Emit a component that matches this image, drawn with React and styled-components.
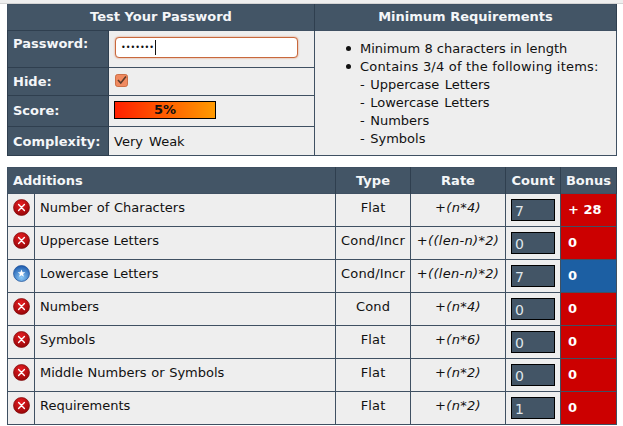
import styled, { createGlobalStyle } from "styled-components";

const GlobalStyle = createGlobalStyle`
  html, body {
    margin: 0;
    padding: 0;
    background: #fff;
    overflow: hidden;
  }
  body {
    font-family: "DejaVu Sans", Verdana, sans-serif;
    font-size: 13px;
    color: #111;
  }
`;

const Page = styled.div`
  width: 623px;
  height: 426px;
  overflow: hidden;
`;

const TopStrip = styled.div`
  background: #eeeeee;
  border-bottom: 1px solid #d4d4d4;
  box-sizing: border-box;
  height: 4px;
`;

const Wrap = styled.div`
  width: 610px;
  margin-left: 7px;
  display: flex;
  flex-direction: column;
  gap: 11px;
`;

const Table = styled.table`
  width: 610px;
  table-layout: fixed;
  border-collapse: collapse;
  border: 1px solid #3f5062;
`;

const Head = styled.th`
  height: ${(p) => p.$h || 26}px;
  box-sizing: border-box;
  background: #435566;
  color: #f4f6f8;
  font-size: 13px;
  font-weight: bold;
  text-align: ${(p) => p.$align || "center"};
  padding: 0 0 ${(p) => p.$bottom ?? 2}px ${(p) => p.$pad || 0}px;
  border-right: 1px solid #2f3f4f;
`;

const Label = styled.td`
  height: ${(p) => p.$h}px;
  box-sizing: border-box;
  background: #435566;
  color: #f4f6f8;
  font-weight: bold;
  padding: ${(p) => p.$top || 0}px 0 ${(p) => p.$bottom || 0}px 5px;
  vertical-align: ${(p) => (p.$top ? "top" : "middle")};
  border: 1px solid #2f3f4f;
`;

const Value = styled.td`
  box-sizing: border-box;
  background: #eeeeee;
  padding: 0 0 0 5px;
  border: 1px solid #3f5062;
  vertical-align: middle;
  word-spacing: ${(p) => p.$words || 0}px;
`;

const PasswordBox = styled.div`
  width: 183px;
  height: 21px;
  box-sizing: border-box;
  margin: 0 0 4px 1px;
  padding-left: 5px;
  background: #fff;
  border: 1px solid #c8683c;
  border-radius: 4px;
  box-shadow: 0 0 2px #e08a60;
  display: flex;
  align-items: center;
  font-size: 8px;
`;

const Caret = styled.span`
  width: 1px;
  height: 15px;
  background: #111;
  margin-left: 1px;
`;

const Check = styled.svg`
  display: block;
  margin: 0 0 3px 1px;
`;

const ScoreBar = styled.div`
  width: 102px;
  height: 18px;
  box-sizing: border-box;
  margin-bottom: 3px;
  border: 1px solid #000;
  background: linear-gradient(to right, #ff2000, #ff9a00);
  color: #111;
  font-weight: bold;
  font-size: 13px;
  line-height: 16px;
  text-align: center;
`;

const ReqCell = styled.td`
  background: #eeeeee;
  border: 1px solid #3f5062;
  vertical-align: top;
  padding: 9px 0 0 45px;
  line-height: 18px;
`;

const Bullet = styled.div`
  position: relative;
  letter-spacing: ${(p) => p.$track || 0}px;
  &::before {
    content: "";
    position: absolute;
    left: -14px;
    top: 6px;
    width: 5px;
    height: 5px;
    border-radius: 50%;
    background: #111;
  }
`;

const Sub = styled.div`
  word-spacing: 1.4px;
`;

const IconCell = styled.td`
  height: 33px;
  box-sizing: border-box;
  background: #eeeeee;
  border: 1px solid #3f5062;
  padding: 0 0 6px 5px;
  vertical-align: middle;
`;

const Icon = styled.svg`
  display: block;
`;

const NameCell = styled.td`
  box-sizing: border-box;
  background: #eeeeee;
  border: 1px solid #3f5062;
  padding: 0 0 5px 5px;
  vertical-align: middle;
  word-spacing: 0.5px;
`;

const TypeCell = styled(NameCell)`
  padding-left: 0;
  text-align: center;
  letter-spacing: 0.15px;
`;

const RateCell = styled(TypeCell)`
  font-style: italic;
  letter-spacing: 0.3px;
`;

const CountCell = styled.td`
  box-sizing: border-box;
  background: #eeeeee;
  border: 1px solid #3f5062;
  padding: 0 0 0 5px;
  vertical-align: middle;
`;

const CountBox = styled.div`
  width: 44px;
  height: 22px;
  box-sizing: border-box;
  padding: 3px 0 0 3px;
  background: #435566;
  border: 1px solid #000;
  color: #dfe5ea;
  font-size: 14px;
  line-height: 17px;
`;

const BonusCell = styled.td`
  box-sizing: border-box;
  background: ${(p) => (p.$ok ? "#1c5fa3" : "#cc0000")};
  border: 1px solid #3f5062;
  color: #fff;
  font-weight: bold;
  padding: 0 0 2px 7px;
  vertical-align: middle;
`;

const FailIcon = () => (
  <Icon width="17" height="17" viewBox="0 0 17 17">
    <defs>
      <radialGradient id="failFill" cx="45%" cy="30%" r="75%">
        <stop offset="0%" stopColor="#e61e22" />
        <stop offset="100%" stopColor="#930406" />
      </radialGradient>
    </defs>
    <circle cx="8.5" cy="8.5" r="8" fill="url(#failFill)" stroke="#7d0a0a" strokeWidth="0.7" />
    <path d="M5.6 5.6l5.8 5.8M11.4 5.6l-5.8 5.8" stroke="#fff" strokeWidth="1.4" strokeLinecap="round" />
  </Icon>
);

const StarIcon = () => (
  <Icon width="17" height="17" viewBox="0 0 17 17">
    <defs>
      <radialGradient id="starFill" cx="50%" cy="75%" r="75%">
        <stop offset="0%" stopColor="#8ccaf8" />
        <stop offset="100%" stopColor="#1a58ac" />
      </radialGradient>
    </defs>
    <circle cx="8.5" cy="8.5" r="8" fill="url(#starFill)" stroke="#1b4f96" strokeWidth="0.7" />
    <path d="M8.5 4.6l1.1 2.6h2.7l-2.2 1.8.8 2.8-2.4-1.6-2.4 1.6.8-2.8-2.2-1.8h2.7z" fill="#fff" />
  </Icon>
);

const rows = [
  { name: "Number of Characters", type: "Flat", rate: "+(n*4)", count: "7", bonus: "+ 28" },
  { name: "Uppercase Letters", type: "Cond/Incr", rate: "+((len-n)*2)", count: "0", bonus: "0" },
  { name: "Lowercase Letters", type: "Cond/Incr", rate: "+((len-n)*2)", count: "7", bonus: "0", ok: true },
  { name: "Numbers", type: "Cond", rate: "+(n*4)", count: "0", bonus: "0" },
  { name: "Symbols", type: "Flat", rate: "+(n*6)", count: "0", bonus: "0" },
  { name: "Middle Numbers or Symbols", type: "Flat", rate: "+(n*2)", count: "0", bonus: "0" },
  { name: "Requirements", type: "Flat", rate: "+(n*2)", count: "1", bonus: "0" },
];

export default function App() {
  return (
    <Page>
      <GlobalStyle />
      <TopStrip />
      <Wrap>
        <Table>
          <colgroup>
            <col style={{ width: 101 }} />
            <col style={{ width: 206 }} />
            <col />
          </colgroup>
          <thead>
            <tr>
              <Head colSpan={2}>Test Your Password</Head>
              <Head>Minimum Requirements</Head>
            </tr>
          </thead>
          <tbody>
            <tr>
              <Label $h={37} $top={5}>Password:</Label>
              <Value>
                <PasswordBox>
                  •••••••
                  <Caret />
                </PasswordBox>
              </Value>
              <ReqCell rowSpan={4}>
                <Bullet>Minimum 8 characters in length</Bullet>
                <Bullet $track={0.2}>Contains 3/4 of the following items:</Bullet>
                <Sub>- Uppercase Letters</Sub>
                <Sub>- Lowercase Letters</Sub>
                <Sub>- Numbers</Sub>
                <Sub>- Symbols</Sub>
              </ReqCell>
            </tr>
            <tr>
              <Label $h={28}>Hide:</Label>
              <Value>
                <Check width="13" height="13" viewBox="0 0 14 14">
                  <rect x="0.5" y="0.5" width="13" height="13" rx="2.5" fill="#f08a60" stroke="#c8683c" />
                  <path d="M3.2 6.5l3 3.2 5.6-7" fill="none" stroke="#5a3a2a" strokeWidth="1.7" />
                </Check>
              </Value>
            </tr>
            <tr>
              <Label $h={31} $bottom={2}>Score:</Label>
              <Value>
                <ScoreBar>5%</ScoreBar>
              </Value>
            </tr>
            <tr>
              <Label $h={29}>Complexity:</Label>
              <Value $words={2}>Very Weak</Value>
            </tr>
          </tbody>
        </Table>
        <Table>
          <colgroup>
            <col style={{ width: 27 }} />
            <col style={{ width: 301 }} />
            <col style={{ width: 75 }} />
            <col style={{ width: 95 }} />
            <col style={{ width: 55 }} />
            <col />
          </colgroup>
          <thead>
            <tr>
              <Head colSpan={2} $align="left" $pad={5} $bottom={1}>Additions</Head>
              <Head $bottom={1}>Type</Head>
              <Head $bottom={1}>Rate</Head>
              <Head $bottom={1}>Count</Head>
              <Head $bottom={1}>Bonus</Head>
            </tr>
          </thead>
          <tbody>
            {rows.map((r) => (
              <tr key={r.name}>
                <IconCell>{r.ok ? <StarIcon /> : <FailIcon />}</IconCell>
                <NameCell>{r.name}</NameCell>
                <TypeCell>{r.type}</TypeCell>
                <RateCell>{r.rate}</RateCell>
                <CountCell>
                  <CountBox>{r.count}</CountBox>
                </CountCell>
                <BonusCell $ok={r.ok}>{r.bonus}</BonusCell>
              </tr>
            ))}
          </tbody>
        </Table>
      </Wrap>
    </Page>
  );
}
